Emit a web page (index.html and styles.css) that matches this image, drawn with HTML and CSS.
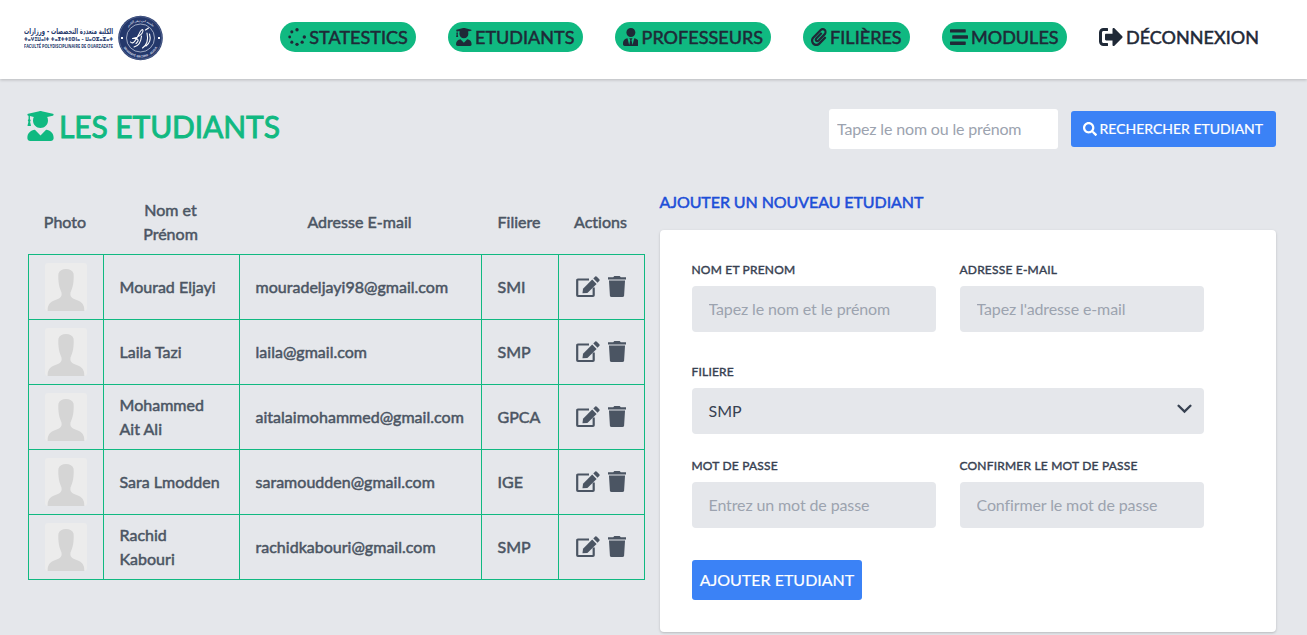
FILE: index.html
```html
<!DOCTYPE html>
<html lang="fr">
<head>
<meta charset="utf-8">
<title>Les étudiants</title>
<link rel="stylesheet" href="styles.css">
</head>
<body>
<svg class="defs" aria-hidden="true">
  <symbol id="spinner" viewBox="0 0 512 512"><circle cx="256" cy="48" r="48"/><circle cx="256" cy="464" r="48"/><circle cx="48" cy="256" r="40"/><circle cx="464" cy="256" r="48"/><circle cx="109" cy="109" r="44"/><circle cx="109" cy="403" r="44"/><circle cx="403" cy="403" r="46"/></symbol>
  <symbol id="graduate" viewBox="0 0 448 512"><path d="M319.4 320.6L224 416l-95.4-95.4C57.1 323.7 0 382.2 0 454.4v9.6c0 26.5 21.5 48 48 48h352c26.5 0 48-21.5 48-48v-9.6c0-72.2-57.1-130.7-128.6-133.8zM13.6 79.8l6.4 1.5v58.4c-7 4.2-12 11.5-12 20.3 0 8.4 4.6 15.4 11.1 19.7L3.5 242c-1.7 6.9 2.1 14 7.6 14h41.8c5.5 0 9.3-7.1 7.6-14l-15.6-62.3C51.4 175.4 56 168.4 56 160c0-8.8-5-16.1-12-20.3V87.1l66 15.9c-8.6 17.2-14 36.4-14 57 0 70.7 57.3 128 128 128s128-57.3 128-128c0-20.6-5.3-39.8-14-57l96.3-23.2c18.2-4.4 18.2-27.1 0-31.5l-190.4-46c-13-3.1-26.7-3.1-39.7 0L13.6 48.2c-18.1 4.4-18.1 27.2 0 31.6z"/></symbol>
  <symbol id="tie" viewBox="0 0 448 512"><path d="M224 256c70.7 0 128-57.3 128-128S294.7 0 224 0 96 57.3 96 128s57.3 128 128 128zm95.8 32.6L272 480l-32-136 32-56h-96l32 56-32 136-47.8-191.4C56.9 292 0 350.3 0 422.4V464c0 26.500 21.500 48 48 48h352c26.500 0 48-21.500 48-48v-41.600c0-72.100-56.900-130.400-128.200-133.800z"/></symbol>
  <symbol id="clip" viewBox="0 0 448 512"><path d="M43.246 466.142c-58.43-60.289-57.341-157.511 1.386-217.581L254.392 34c44.316-45.332 116.351-45.336 160.671 0 43.89 44.894 43.943 117.329 0 162.276L232.214 383.128c-29.855 30.537-78.633 30.111-107.982-.998-28.275-29.97-27.368-77.473 1.452-106.953l143.743-146.835c6.182-6.314 16.312-6.422 22.626-.241l22.861 22.379c6.315 6.182 6.422 16.312.241 22.626L171.427 319.927c-4.932 5.045-5.236 13.428-.648 18.292 4.372 4.634 11.245 4.711 15.688.165l182.849-186.851c19.613-20.062 19.613-52.725-.011-72.798-19.189-19.627-49.957-19.637-69.154 0L90.39 293.295c-34.763 35.56-35.299 93.12-1.191 128.313 34.01 35.093 88.985 35.137 123.058.286l172.06-175.999c6.177-6.319 16.307-6.433 22.626-.256l22.877 22.364c6.319 6.177 6.434 16.307.256 22.626l-172.06 175.998c-59.576 60.938-155.943 60.216-214.77-.485z"/></symbol>
  <symbol id="stream" viewBox="0 0 512 512"><path d="M16 128h416c8.84 0 16-7.16 16-16V48c0-8.84-7.16-16-16-16H16C7.16 32 0 39.16 0 48v64c0 8.84 7.16 16 16 16zm480 80H80c-8.84 0-16 7.16-16 16v64c0 8.84 7.16 16 16 16h416c8.84 0 16-7.16 16-16v-64c0-8.84-7.16-16-16-16zm-64 176H16c-8.84 0-16 7.16-16 16v64c0 8.84 7.16 16 16 16h416c8.84 0 16-7.16 16-16v-64c0-8.84-7.16-16-16-16z"/></symbol>
  <symbol id="exit" viewBox="0 0 512 512"><path d="M497 273L329 441c-15 15-41 4.5-41-17v-96H152c-13.3 0-24-10.7-24-24v-96c0-13.3 10.7-24 24-24h136V88c0-21.4 25.9-32 41-17l168 168c9.3 9.4 9.3 24.6 0 34zM192 436v-40c0-6.6-5.4-12-12-12H96c-17.7 0-32-14.3-32-32V160c0-17.7 14.3-32 32-32h84c6.6 0 12-5.4 12-12V76c0-6.6-5.4-12-12-12H96c-53 0-96 43-96 96v192c0 53 43 96 96 96h84c6.6 0 12-5.4 12-12z"/></symbol>
  <symbol id="search" viewBox="0 0 512 512"><path d="M505 442.7L405.3 343c-4.5-4.5-10.6-7-17-7H372c27.6-35.3 44-79.7 44-128C416 93.1 322.9 0 208 0S0 93.1 0 208s93.1 208 208 208c48.3 0 92.7-16.4 128-44v16.3c0 6.4 2.5 12.5 7 17l99.7 99.7c9.4 9.4 24.6 9.4 33.9 0l28.3-28.3c9.4-9.4 9.4-24.6.1-34zM208 336c-70.7 0-128-57.2-128-128 0-70.7 57.2-128 128-128 70.7 0 128 57.2 128 128 0 70.7-57.2 128-128 128z"/></symbol>
  <symbol id="edit" viewBox="0 0 24 22"><path d="M13 3.500H1.900Q1.200 3.500 1.200 4.200V19.300Q1.200 20 1.900 20H17Q17.700 20 17.700 19.300V11.500" fill="none" stroke="currentColor" stroke-width="2.200"/><path d="M6.500 17.200L7 12.700L16.200 3.500L20.600 7.900L11.400 17.100Z"/><path d="M17.300 2.500L19.200.6Q20 0 20.800.7L23.300 3.200Q24 4 23.400 4.800L21.600 6.700Z"/></symbol>
  <symbol id="trash" viewBox="0 0 18 21"><path d="M0 1.300H5.200L6.300 0H11.700L12.800 1.300H18V3.400H0Z"/><path d="M1 4.500H17L16.100 19.400Q16 21 14.400 21H3.600Q2 21 1.900 19.400Z"/></symbol>
  <symbol id="avatar" viewBox="0 0 42 48"><rect width="42" height="48" rx="3" fill="#ececec"/><path d="M2.700 48C2.500 43 4 40 8 38L14 35.500C16.500 34 17 32 16.500 29.500C15 26 13.700 22 13.500 18C13.200 15 13.200 12 13.500 10.500C14.500 7.500 17 6 21 6S27.500 7.500 28.500 10.500C28.800 12 28.800 15 28.500 18C28.300 22 27 26 25.500 29.500C25 32 25.500 34 28 35.500L34 38C38 40 39.500 43 39.300 48Z" fill="#d5d5d5"/></symbol>
</svg>

<header class="topbar">
  <svg class="logo" width="142" height="48" viewBox="0 0 142 48" role="img">
    <g class="logo-text">
      <text class="logo-ar" x="0" y="19.500" direction="ltr" textLength="89" lengthAdjust="spacingAndGlyphs">الكلية متعددة التخصصات - ورزازات</text>
      <text class="logo-tf" x="0" y="27.200" textLength="89" lengthAdjust="spacingAndGlyphs">ⵜⴰⵖⵉⵡⴰⵏⵜ ⵜⴰⴳⵜⵜⵓⵙⵏⴰ – ⵡⴰⵔⵣⴰⵣⴰⵜ</text>
      <text class="logo-fr" x="0" y="34.200" textLength="89" lengthAdjust="spacingAndGlyphs">FACULTÉ POLYDISCIPLINAIRE DE OUARZAZATE</text>
    </g>
    <circle cx="116.500" cy="24" r="22.300" fill="#24386b"/>
    <circle cx="116.500" cy="24" r="14" fill="none" stroke="#d7ddea" stroke-width=".7"/>
    <circle cx="116.500" cy="24" r="21.300" fill="none" stroke="#8e9bbb" stroke-width=".4"/>
    <path id="arcTop" d="M100 24A16.500 16.500 0 0 1 133 24" fill="none"/>
    <path id="arcBottom" d="M97 24A19.500 19.500 0 0 0 136 24" fill="none"/>
    <text class="seal"><textPath href="#arcTop" startOffset="50%" text-anchor="middle" textLength="28">جامعة ابن زهر أكادير</textPath></text>
    <text class="seal"><textPath href="#arcBottom" startOffset="50%" text-anchor="middle" textLength="41" lengthAdjust="spacingAndGlyphs">UNIVERSITÉ IBN ZOHR - AGADIR</textPath></text>
    <g fill="none" stroke="#fff" stroke-linecap="round" stroke-linejoin="round" stroke-width="1.100"><path d="M106.500 28C109 31 112 26 115 20C117 15.500 119 14.500 119 17C118.500 20 114 24 108.500 24.500C114 24 116 26 112 29.500M110 33C115 32 117 28 117.500 22M118.500 34C123 31 124.500 26 123 19M122 32C126 29 127 25 125.500 20M121.500 16L124.500 14"/></g>
    <rect x="97" y="23" width="2" height="2" fill="#fff"/><rect x="134" y="23" width="2" height="2" fill="#fff"/>
  </svg>
  <nav class="nav">
    <a class="pill"><svg class="ic20"><use href="#spinner"/></svg><span>STATESTICS</span></a>
    <a class="pill"><svg class="ic18"><use href="#graduate"/></svg><span>ETUDIANTS</span></a>
    <a class="pill"><svg class="ic18"><use href="#tie"/></svg><span>PROFESSEURS</span></a>
    <a class="pill"><svg class="ic18"><use href="#clip"/></svg><span>FILIÈRES</span></a>
    <a class="pill"><svg class="ic20"><use href="#stream"/></svg><span>MODULES</span></a>
    <a class="logout"><svg class="ic24"><use href="#exit"/></svg><span>DÉCONNEXION</span></a>
  </nav>
</header>

<section class="heading">
  <h1><svg><use href="#graduate"/></svg><span>LES ETUDIANTS</span></h1>
  <form class="search">
    <input type="text" placeholder="Tapez le nom ou le prénom">
    <button type="button"><svg><use href="#search"/></svg><span>RECHERCHER ETUDIANT</span></button>
  </form>
</section>

<main class="content">
  <table class="students">
    <colgroup><col class="c1"><col class="c2"><col class="c3"><col class="c4"><col class="c5"></colgroup>
    <thead><tr><th>Photo</th><th>Nom et Prénom</th><th>Adresse E-mail</th><th>Filiere</th><th>Actions</th></tr></thead>
    <tbody>
      <tr><td><svg class="avatar"><use href="#avatar"/></svg></td><td>Mourad Eljayi</td><td>mouradeljayi98@gmail.com</td><td>SMI</td><td><div class="actions"><svg class="edit"><use href="#edit"/></svg><svg class="trash"><use href="#trash"/></svg></div></td></tr>
      <tr><td><svg class="avatar"><use href="#avatar"/></svg></td><td>Laila Tazi</td><td>laila@gmail.com</td><td>SMP</td><td><div class="actions"><svg class="edit"><use href="#edit"/></svg><svg class="trash"><use href="#trash"/></svg></div></td></tr>
      <tr><td><svg class="avatar"><use href="#avatar"/></svg></td><td>Mohammed<br>Ait Ali</td><td>aitalaimohammed@gmail.com</td><td>GPCA</td><td><div class="actions"><svg class="edit"><use href="#edit"/></svg><svg class="trash"><use href="#trash"/></svg></div></td></tr>
      <tr><td><svg class="avatar"><use href="#avatar"/></svg></td><td>Sara Lmodden</td><td>saramoudden@gmail.com</td><td>IGE</td><td><div class="actions"><svg class="edit"><use href="#edit"/></svg><svg class="trash"><use href="#trash"/></svg></div></td></tr>
      <tr><td><svg class="avatar"><use href="#avatar"/></svg></td><td>Rachid<br>Kabouri</td><td>rachidkabouri@gmail.com</td><td>SMP</td><td><div class="actions"><svg class="edit"><use href="#edit"/></svg><svg class="trash"><use href="#trash"/></svg></div></td></tr>
    </tbody>
  </table>

  <section class="add">
    <h2>AJOUTER UN NOUVEAU ETUDIANT</h2>
    <form class="card">
      <div class="fields">
        <label class="field"><span>NOM ET PRENOM</span><input type="text" placeholder="Tapez le nom et le prénom"></label>
        <label class="field"><span>ADRESSE E-MAIL</span><input type="email" placeholder="Tapez l'adresse e-mail"></label>
        <label class="field wide"><span>FILIERE</span><div class="select">SMP<svg viewBox="0 0 14 9"><path d="M1.500 1.500L7 7L12.500 1.500"/></svg></div></label>
        <label class="field"><span>MOT DE PASSE</span><input type="password" placeholder="Entrez un mot de passe"></label>
        <label class="field"><span>CONFIRMER LE MOT DE PASSE</span><input type="password" placeholder="Confirmer le mot de passe"></label>
      </div>
      <button type="button">AJOUTER ETUDIANT</button>
    </form>
  </section>
</main>
</body>
</html>
```
FILE: styles.css
```css
* { box-sizing: border-box; margin: 0; padding: 0; }
html, body { height: 635px; overflow: hidden; }
body { background: #e5e7eb; font: 400 16px/24px Lato, "Noto Sans", sans-serif; color: #4b5563; }
svg { display: block; fill: currentColor; flex: none; }
.defs { display: none; }
input, button { font: inherit; border: 0; outline: 0; }
input::placeholder { color: #9ca3af; opacity: 1; letter-spacing: -.16px; }

.topbar { height: 79px; background: #fff; box-shadow: 0 1px 3px rgba(0,0,0,.2); display: flex; align-items: flex-start; justify-content: space-between; padding: 14px 48px 0 24px; }
.logo-text { fill: #24386b; }
.logo-ar { font: 700 8px "DejaVu Sans", sans-serif; }
.logo-tf { font: 700 5.5px "DejaVu Sans", sans-serif; }
.logo-fr { font: 700 4.6px "Open Sans", sans-serif; }
.seal { font: 700 3px "DejaVu Sans", sans-serif; fill: #cdd4e4; }
.nav { display: flex; gap: 32px; padding-top: 8px; color: #1f2937; font-size: 18px; letter-spacing: .03px; -webkit-text-stroke: .5px; }
.nav a { display: flex; align-items: center; gap: 3.3px; height: 30px; }
.nav svg, h1 svg, .search svg { stroke: none; }
.pill { background: #10b981; border-radius: 15px; padding: 0 8px; }
.ic18 { width: 15.75px; height: 18px; }
.ic20 { width: 18px; height: 18px; }
.ic24 { width: 24px; height: 24px; }

.heading { display: flex; justify-content: space-between; padding: 30px 31px 0 27px; height: 111px; }
h1 { display: flex; align-items: center; gap: 5px; height: 34px; font-weight: 400; font-size: 30px; letter-spacing: -.1px; color: #10b981; -webkit-text-stroke: .9px; }
h1 svg { width: 27px; height: 30px; }
.search { display: flex; align-items: center; gap: 13px; height: 40px; }
.search input { width: 229px; height: 40px; padding: 0 8px 2px; border-radius: 3px; background: #fff; }
.search button { display: flex; align-items: center; gap: 3px; height: 36px; width: 205px; padding: 0 11.5px; border-radius: 3px; background: #3b82f6; color: #fff; font-size: 14px; -webkit-text-stroke: .2px; white-space: nowrap; }
.search svg { width: 14px; height: 14px; }

.content { display: flex; gap: 15px; padding-left: 28px; align-items: flex-start; }
.students { width: 617px; flex: none; table-layout: fixed; border-collapse: collapse; letter-spacing: .02px; -webkit-text-stroke: .5px; }
.c1 { width: 75px; } .c2 { width: 136px; } .c3 { width: 242px; } .c4 { width: 77px; } .c5 { width: 86px; }
th { height: 64px; font-weight: 400; text-align: center; padding: 0 17px 0 15px; }
th:nth-child(n+4) { padding: 0 2px 0 0; }
td { height: 65px; padding: 0 15px; border: 1px solid #10b981; }
td:nth-child(n+2) { padding-left: 15.5px; }
td:first-child { padding: 0 0 0 16px; }
td:last-child { padding: 0 0 0 17px; }
.avatar { width: 42px; height: 48px; }
.actions { display: flex; gap: 8px; align-items: center; }
.edit { width: 24px; height: 22px; stroke: none; }
.trash { width: 18px; height: 21px; stroke: none; }

h2 { font-size: 16px; line-height: 24px; font-weight: 400; color: #1d4ed8; -webkit-text-stroke: .5px; letter-spacing: -.08px; margin: 0 0 16px -.5px; }
.add { width: 616px; flex: none; }
.card { height: 402px; background: #fff; border-radius: 4px; box-shadow: 0 1px 3px rgba(0,0,0,.15), 0 1px 2px rgba(0,0,0,.06); padding: 32px; color: #374151; }
.fields { display: grid; grid-template-columns: 244px 244px; column-gap: 24px; }
.field { display: block; height: 102px; }
.field.wide { grid-column: 1 / 3; height: 94px; }
.field > span { display: block; height: 24px; line-height: 16px; font-size: 12px; letter-spacing: .2px; margin-left: -.5px; -webkit-text-stroke: .4px; }
.field input, .select { width: 100%; height: 46px; border-radius: 4px; background: #e5e7eb; padding: 0 17px; }
.field input { padding: 0 16.5px 2px; }
.field input::placeholder { letter-spacing: -.12px; }
.select { display: flex; align-items: center; justify-content: space-between; padding: 0 12px 0 16.5px; }
.select svg { width: 15px; height: 10px; fill: none; stroke: #374151; stroke-width: 2.2; stroke-linecap: round; margin-bottom: 4px; }
.card button { height: 40px; width: 170px; border-radius: 3px; background: #3b82f6; color: #fff; -webkit-text-stroke: .2px; }
```
